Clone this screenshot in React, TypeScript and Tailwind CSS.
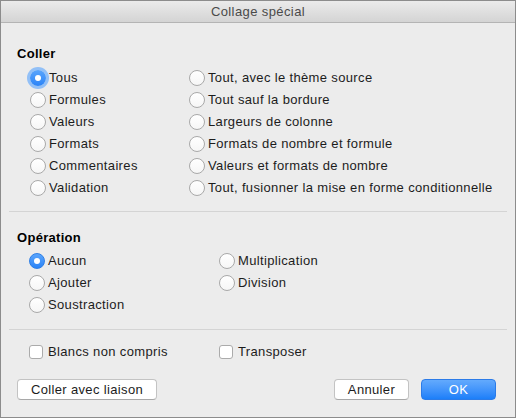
import type { ReactNode } from "react";

const pasteLeft = ["Tous", "Formules", "Valeurs", "Formats", "Commentaires", "Validation"];
const pasteRight = [
  "Tout, avec le thème source",
  "Tout sauf la bordure",
  "Largeurs de colonne",
  "Formats de nombre et formule",
  "Valeurs et formats de nombre",
  "Tout, fusionner la mise en forme conditionnelle",
];

function Radio({ checked, focused, label }: { checked?: boolean; focused?: boolean; label: string }) {
  return (
    <div className="flex h-[22px] items-center gap-[3px]">
      {checked ? (
        <span
          className={
            "flex h-[16px] w-[16px] items-center justify-center rounded-full bg-gradient-to-b from-[#5aa5fc] to-[#2a84f7] " +
            (focused ? "ring-[3px] ring-[#92c0f7]" : "border border-[#2f7fe6]")
          }
        >
          <span className="h-[6px] w-[6px] rounded-full bg-white" />
        </span>
      ) : (
        <span className="h-[16px] w-[16px] rounded-full border border-[#a9a9a9] bg-gradient-to-b from-white to-[#f6f6f6]" />
      )}
      <span className="text-[13px] tracking-[0.35px] text-[#1c1c1c]">{label}</span>
    </div>
  );
}

function Checkbox({ label }: { label: string }) {
  return (
    <div className="flex h-[22px] items-center gap-[5px]">
      <span className="h-[14px] w-[14px] rounded-[3px] border border-[#ababab] bg-white" />
      <span className="text-[13px] tracking-[0.35px] text-[#1c1c1c]">{label}</span>
    </div>
  );
}

function Button({ children, primary, className }: { children: ReactNode; primary?: boolean; className?: string }) {
  return (
    <div
      className={
        "flex h-[21px] items-center justify-center rounded-[4px] text-[13px] tracking-[0.35px] " +
        (primary
          ? "border border-[#2b7be8] bg-gradient-to-b from-[#63aafd] to-[#1b7ff9] text-white "
          : "border border-[#c3c3c3] border-b-[#a8a8a8] bg-white text-[#1c1c1c] ") +
        (className ?? "")
      }
    >
      {children}
    </div>
  );
}

export default function App() {
  return (
    <div className="flex h-[418px] w-[516px] flex-col border border-[#8c8c8c] bg-[#ececec] font-['Liberation_Sans',Arial,sans-serif]">
      <div className="flex h-[22px] shrink-0 items-center justify-center border-b border-[#b4b4b4] bg-gradient-to-b from-[#ebebeb] to-[#d4d4d4] text-[13px] tracking-[0.4px] text-[#4a4a4a]">
        Collage spécial
      </div>

      <div className="flex flex-1 flex-col px-[8px]">
        <section className="pt-[23px] pb-[12px]">
          <h2 className="pl-[8px] text-[13px] leading-[16px] font-bold tracking-[0.3px] text-black">Coller</h2>
          <div className="mt-[5px] flex pl-[21px]">
            <div className="w-[159px]">
              {pasteLeft.map((l, i) => (
                <Radio key={l} label={l} checked={i === 0} focused={i === 0} />
              ))}
            </div>
            <div>
              {pasteRight.map((l) => (
                <Radio key={l} label={l} />
              ))}
            </div>
          </div>
        </section>

        <div className="h-px bg-[#d4d4d4]" />

        <section className="pt-[18px] pb-[13px]">
          <h2 className="pl-[8px] text-[13px] leading-[16px] font-bold tracking-[0.3px] text-black">Opération</h2>
          <div className="mt-[4px] flex pl-[20px]">
            <div className="w-[190px]">
              <Radio label="Aucun" checked />
              <Radio label="Ajouter" />
              <Radio label="Soustraction" />
            </div>
            <div>
              <Radio label="Multiplication" />
              <Radio label="Division" />
            </div>
          </div>
        </section>

        <div className="h-px bg-[#d4d4d4]" />

        <div className="mt-[11px] flex pl-[20px]">
          <div className="w-[190px]">
            <Checkbox label="Blancs non compris" />
          </div>
          <Checkbox label="Transposer" />
        </div>

        <div className="mt-[16px] flex items-center pl-[8px] pr-[11px]">
          <Button className="w-[140px]">Coller avec liaison</Button>
          <div className="flex-1" />
          <Button className="w-[75px]">Annuler</Button>
          <Button primary className="ml-[12px] w-[75px]">
            OK
          </Button>
        </div>
      </div>
    </div>
  );
}
